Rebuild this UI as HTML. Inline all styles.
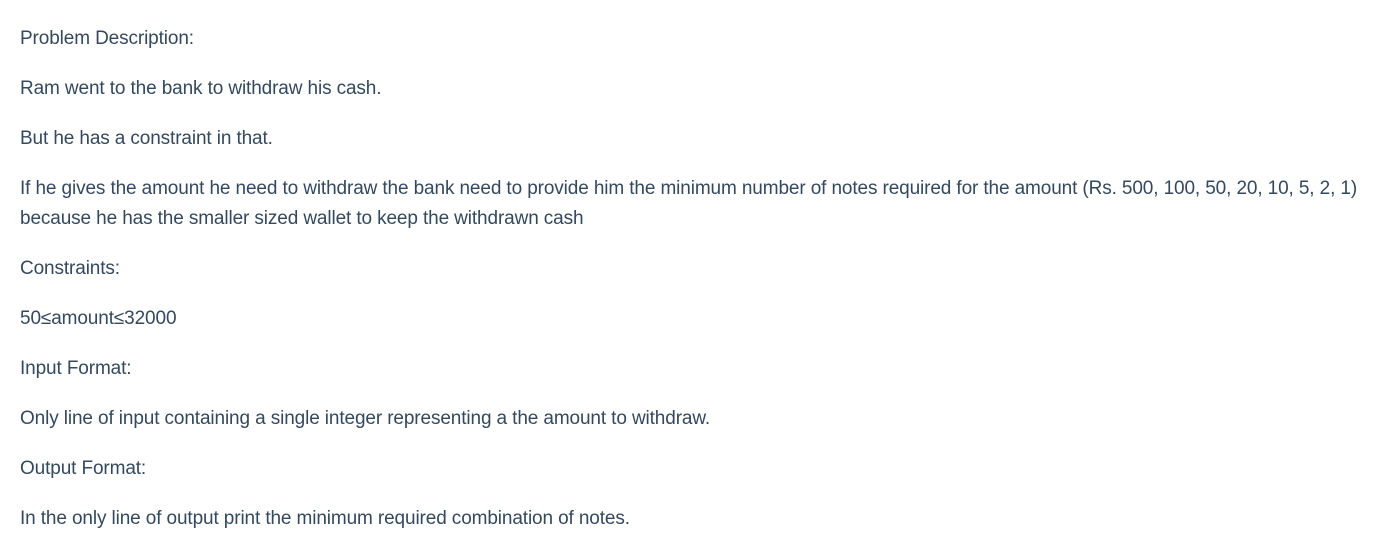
<!DOCTYPE html>
<html><head><meta charset="utf-8"><style>
html,body{margin:0;padding:0;background:#fff;width:1383px;height:560px;overflow:hidden}
body{font-family:"Liberation Sans",sans-serif;color:#34495e;font-size:19px;letter-spacing:-0.12px}
.wrap{padding:24px 0 0 20px}
p{margin:0 0 20px 0;line-height:30px;white-space:nowrap}
</style></head><body><div class="wrap">
<p>Problem Description:</p>
<p>Ram went to the bank to withdraw his cash.</p>
<p>But he has a constraint in that.</p>
<p>If he gives the amount he need to withdraw the bank need to provide him the minimum number of notes required for the amount (Rs. 500, 100, 50, 20, 10, 5, 2, 1)<br>because he has the smaller sized wallet to keep the withdrawn cash</p>
<p>Constraints:</p>
<p>50≤amount≤32000</p>
<p>Input Format:</p>
<p>Only line of input containing a single integer representing a the amount to withdraw.</p>
<p>Output Format:</p>
<p>In the only line of output print the minimum required combination of notes.</p>
</div></body></html>
